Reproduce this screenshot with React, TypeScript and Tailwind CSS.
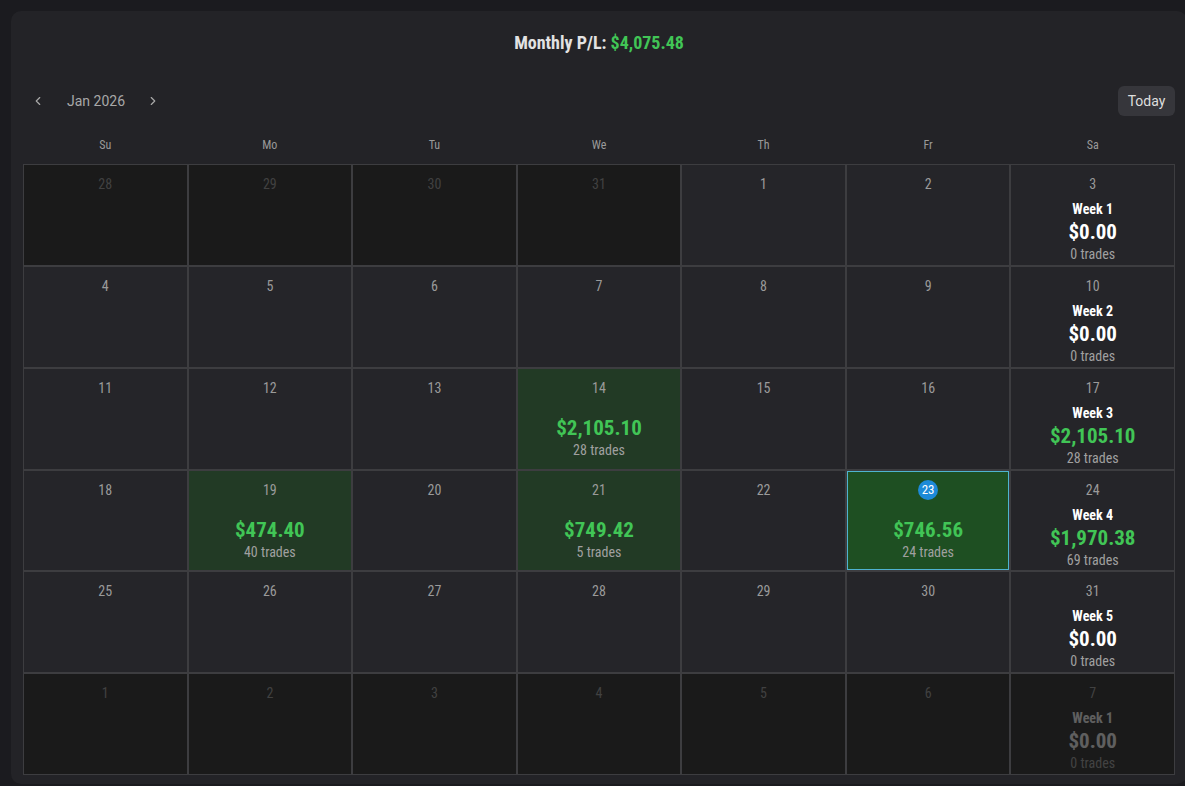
import React from 'react';
import { ChevronLeft, ChevronRight } from 'lucide-react';

type Day = {
  n: number;
  dim?: boolean;
  pnl?: string;
  trades?: number;
  today?: boolean;
  week?: { label: string; pnl: string; trades: number; green?: boolean };
};

const cond = "font-['Roboto_Condensed','Liberation_Sans_Narrow','Roboto',sans-serif]";

const weeks: Day[][] = [
  [
    { n: 28, dim: true },
    { n: 29, dim: true },
    { n: 30, dim: true },
    { n: 31, dim: true },
    { n: 1 },
    { n: 2 },
    { n: 3, week: { label: 'Week 1', pnl: '$0.00', trades: 0 } },
  ],
  [
    { n: 4 },
    { n: 5 },
    { n: 6 },
    { n: 7 },
    { n: 8 },
    { n: 9 },
    { n: 10, week: { label: 'Week 2', pnl: '$0.00', trades: 0 } },
  ],
  [
    { n: 11 },
    { n: 12 },
    { n: 13 },
    { n: 14, pnl: '$2,105.10', trades: 28 },
    { n: 15 },
    { n: 16 },
    { n: 17, week: { label: 'Week 3', pnl: '$2,105.10', trades: 28, green: true } },
  ],
  [
    { n: 18 },
    { n: 19, pnl: '$474.40', trades: 40 },
    { n: 20 },
    { n: 21, pnl: '$749.42', trades: 5 },
    { n: 22 },
    { n: 23, pnl: '$746.56', trades: 24, today: true },
    { n: 24, week: { label: 'Week 4', pnl: '$1,970.38', trades: 69, green: true } },
  ],
  [
    { n: 25 },
    { n: 26 },
    { n: 27 },
    { n: 28 },
    { n: 29 },
    { n: 30 },
    { n: 31, week: { label: 'Week 5', pnl: '$0.00', trades: 0 } },
  ],
  [
    { n: 1, dim: true },
    { n: 2, dim: true },
    { n: 3, dim: true },
    { n: 4, dim: true },
    { n: 5, dim: true },
    { n: 6, dim: true },
    { n: 7, dim: true, week: { label: 'Week 1', pnl: '$0.00', trades: 0 } },
  ],
];

function Cell({ d }: { d: Day }) {
  let bg = 'bg-[#252529]';
  if (d.dim) bg = 'bg-[#1a1a1a]';
  else if (d.today) bg = 'bg-[#1e4f22] shadow-[inset_0_0_0_1px_#4fb3d0]';
  else if (d.pnl) bg = 'bg-[#223a25]';

  return (
    <div className={`border border-[#3d3d40] ${bg} flex flex-col items-center pt-[10px]`}>
      <div className={`flex flex-col items-center ${d.dim ? 'opacity-30' : ''}`}>
        <div className="h-[18px] flex items-center justify-center">
          {d.today ? (
            <span className="w-[20px] h-[20px] rounded-full bg-[#1d8ad8] text-white text-[13px] flex items-center justify-center">
              {d.n}
            </span>
          ) : (
            <span className="text-[14px] leading-[18px] text-[#9a9a9a]">{d.n}</span>
          )}
        </div>
        {d.pnl && (
          <>
            <div className="mt-[18px] text-[21px] leading-[26px] font-bold text-[#41c556]">{d.pnl}</div>
            <div className="text-[14px] leading-[18px] text-[#a0a0a0]">{d.trades} trades</div>
          </>
        )}
        {d.week && (
          <>
            <div className="mt-[6px] text-[14px] leading-[20px] font-bold text-white">{d.week.label}</div>
            <div
              className={`text-[21px] leading-[26px] font-bold ${d.week.green ? 'text-[#41c556]' : 'text-white'}`}
            >
              {d.week.pnl}
            </div>
            <div className="text-[14px] leading-[18px] text-[#a0a0a0]">{d.week.trades} trades</div>
          </>
        )}
      </div>
    </div>
  );
}

export default function App() {
  return (
    <div className="w-[1185px] h-[786px] overflow-hidden bg-[#1b1b1f] pl-[11px] pt-[11px]">
      <div className={`w-[1176px] h-[773px] rounded-[10px] bg-[#232327] pt-[22px] pl-[12px] pr-[12px] ${cond}`}>
        <div className="text-center text-[18px] leading-[20px] font-bold text-[#e2e2e2]">
          Monthly P/L: <span className="text-[#41c556]">$4,075.48</span>
        </div>

        <div className="mt-[33px] h-[30px] flex items-center justify-between">
          <div className="flex items-center font-['Roboto',sans-serif] text-[14px] text-[#a8a8a8]">
            <ChevronLeft className="ml-[8px] w-[14px] h-[14px]" strokeWidth={2} />
            <span className="ml-[22px]">Jan 2026</span>
            <ChevronRight className="ml-[21px] w-[14px] h-[14px]" strokeWidth={2} />
          </div>
          <button className="h-[30px] w-[57px] rounded-md bg-[#36363b] text-[14px] text-[#dedede] font-['Roboto',sans-serif]">
            Today
          </button>
        </div>

        <div className="mt-[21px] grid grid-cols-7 text-center text-[12px] leading-[16px] text-[#9a9a9a]">
          {['Su', 'Mo', 'Tu', 'We', 'Th', 'Fr', 'Sa'].map((w) => (
            <div key={w}>{w}</div>
          ))}
        </div>

        <div className="mt-[11px] grid grid-cols-7 grid-rows-6 h-[611px]">
          {weeks.flat().map((d, i) => (
            <Cell key={i} d={d} />
          ))}
        </div>
      </div>
    </div>
  );
}
